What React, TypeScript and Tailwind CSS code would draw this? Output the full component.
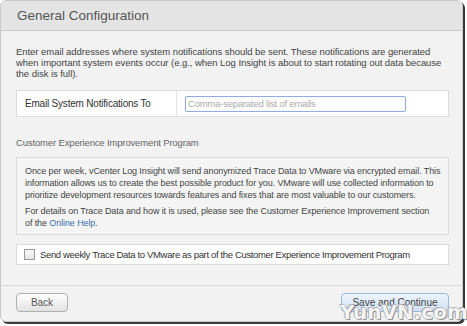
export default function App() {
  return (
    <div className="w-[467px] h-[326px] bg-white relative overflow-hidden font-['Liberation_Sans',Arial,sans-serif]">
      <div className="w-[463px] h-[322px] rounded-[6px] bg-[#f2f2f2] border border-[#c8c8c8] shadow-[2px_2px_0_#3a3a3a] flex flex-col overflow-hidden">
        <div className="h-[30px] shrink-0 bg-[#e4e4e4] border-b border-[#c9c9c9] flex items-center pl-[16px]">
          <h1 className="text-[13.5px] text-[#555] leading-none">General Configuration</h1>
        </div>

        <div className="flex-1 flex flex-col pl-[15px] pr-[13px] pt-[15px] text-[9.5px] leading-[11px] text-[#444] whitespace-nowrap">
          <p className="tracking-[-0.05px]">
            Enter email addresses where system notifications should be sent. These notifications are generated
            <br />
            when important system events occur (e.g., when Log Insight is about to start rotating out data because
            <br />
            the disk is full).
          </p>

          <div className="mt-[11px] h-[27px] shrink-0 bg-white border border-[#dcdcdc] flex items-center">
            <div className="w-[160px] h-full flex items-center pl-[8px] border-r border-[#e4e4e4] text-[#333] text-[10px] tracking-[-0.2px]">
              Email System Notifications To
            </div>
            <div className="pl-[8px]">
              <input
                placeholder="Comma-separated list of emails"
                className="w-[221px] h-[16px] border border-[#8eaee0] rounded-[2px] px-[2px] text-[9.5px] tracking-[-0.2px] placeholder:text-[#aaa] outline-none bg-white"
              />
            </div>
          </div>

          <div className="mt-[20px] text-[#666] text-[9.5px] tracking-[-0.15px]">Customer Experience Improvement Program</div>

          <div className="mt-[9px] bg-[#f4f4f4] border border-[#dcdcdc] px-[8px] pt-[7px] pb-[5px] text-[#444] leading-[12px] text-[9px] tracking-[-0.1px]">
            <p>
              Once per week, vCenter Log Insight will send anonymized Trace Data to VMware via encrypted email. This
              <br />
              information allows us to create the best possible product for you. VMware will use collected information to
              <br />
              prioritize development resources towards features and fixes that are most valuable to our customers.
            </p>
            <p className="mt-[4px]">
              For details on Trace Data and how it is used, please see the Customer Experience Improvement section
              <br />
              of the <span className="text-[#3a6fb0]">Online Help</span>.
            </p>
          </div>

          <div className="mt-[9px] h-[21px] shrink-0 bg-white border border-[#dcdcdc] flex items-center pl-[7px] gap-[5px] text-[#333] tracking-[-0.35px]">
            <span className="w-[11px] h-[11px] border border-[#9a9a9a] bg-gradient-to-b from-[#f8f8f8] to-[#e4e4e4]" />
            <span>Send weekly Trace Data to VMware as part of the Customer Experience Improvement Program</span>
          </div>
        </div>

        <div className="h-[36px] shrink-0 border-t border-[#dadada] flex items-start justify-between pl-[15px] pr-[13px] pt-[7px]">
          <button className="w-[52px] h-[19px] rounded-[4px] border border-[#b0b0b0] bg-gradient-to-b from-white to-[#e2e2e2] text-[10px] text-[#555]">
            Back
          </button>
          <button className="w-[108px] h-[19px] rounded-[4px] border border-[#9cb8d8] bg-gradient-to-b from-[#eef4fb] to-[#cfe0f2] text-[10px] text-[#444]">
            Save and Continue
          </button>
        </div>
      </div>

      <div className="absolute left-[340px] top-[302px] text-[20px] font-bold leading-none text-[#f4f4f4] [text-shadow:0_0_1px_#777,1px_1px_0_#999,-1px_-1px_0_#bbb] font-['DejaVu_Sans',sans-serif]">
        YunVN.com
      </div>
    </div>
  );
}
